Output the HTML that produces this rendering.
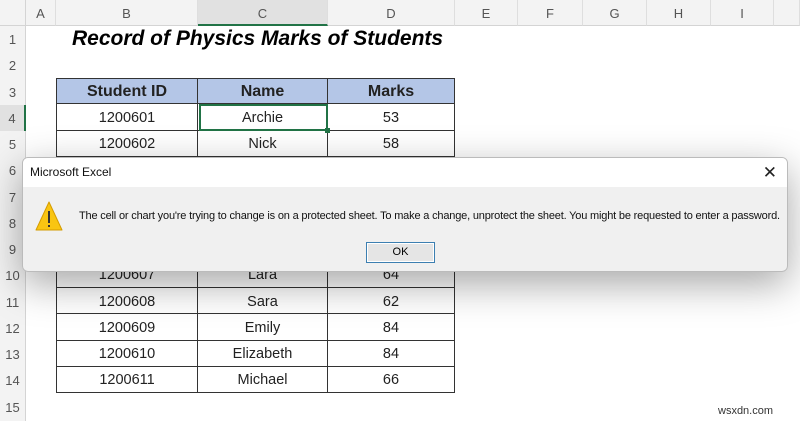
<!DOCTYPE html>
<html style="overflow:hidden;height:421px"><head><meta charset="utf-8"><style>
body{margin:0;width:800px;height:421px;overflow:hidden;background:#fff;font-family:"Liberation Sans",sans-serif;position:relative}
.a{position:absolute}
.ch{top:0;height:26px;background:#f3f3f3;border-bottom:1px solid #d4d4d4;font-size:13px;color:#555;text-align:center;line-height:28px;border-right:1px solid #dedede;box-sizing:border-box}
.rh{left:0;width:26px;background:#f3f3f3;font-size:13px;color:#555;text-align:center;border-right:1px solid #d4d4d4;box-sizing:border-box}
.c{font-size:14.5px;color:#222;text-align:center;box-sizing:border-box;border-right:1px solid #333;border-bottom:1px solid #333;display:flex;align-items:center;justify-content:center;padding-top:2px}
</style></head><body>
<div class="a ch" style="left:0;width:26px;border-right:1px solid #d4d4d4"></div>
<div class="a ch" style="left:26px;width:30px">A</div>
<div class="a ch" style="left:56px;width:142px">B</div>
<div class="a ch" style="left:198px;width:130px;background:#e1e1e1;border-bottom:2px solid #217346">C</div>
<div class="a ch" style="left:328px;width:127px">D</div>
<div class="a ch" style="left:455px;width:63px">E</div>
<div class="a ch" style="left:518px;width:65px">F</div>
<div class="a ch" style="left:583px;width:64px">G</div>
<div class="a ch" style="left:647px;width:64px">H</div>
<div class="a ch" style="left:711px;width:63px">I</div>
<div class="a ch" style="left:774px;width:26px"></div>
<div id="rows"></div>
<div class="a" style="left:72px;top:26px;height:26px;line-height:26px;font-size:21px;font-weight:bold;font-style:italic;color:#000">Record of Physics Marks of Students</div>
<div id="tbl"></div>
<div class="a" style="left:199px;top:104px;width:129px;height:27px;border:2px solid #217346;box-sizing:border-box"></div>
<div class="a" style="left:325px;top:128px;width:5px;height:5px;background:#217346"></div>
<div class="a" style="left:22px;top:157px;width:766px;height:115px;box-shadow:0 12px 40px rgba(0,0,0,0.35);border-radius:6px"></div>
<div class="a" style="left:22px;top:157px;width:766px;height:115px;background:#f0f0f0;border:1px solid #bbb;box-sizing:border-box;border-radius:6px;overflow:hidden">
 <div style="height:29px;background:#fff;font-size:12px;line-height:29px;padding-left:7px;color:#111">Microsoft Excel<span style="position:absolute;right:10px;top:0;font-size:17px;color:#222">✕</span></div>
 <svg class="a" style="left:12px;top:42px" width="28" height="32" viewBox="0 0 28 32"><path d="M14 2 L27 30 L1 30 Z" fill="#f9c512" stroke="#d59c00" stroke-width="1" stroke-linejoin="round"/><rect x="13" y="11" width="2" height="12" fill="#333"/><rect x="13" y="25" width="2" height="2" fill="#333"/></svg>
 <div class="a" style="left:56px;top:52px;font-size:11px;color:#111;white-space:nowrap;letter-spacing:-0.18px">The cell or chart you're trying to change is on a protected sheet. To make a change, unprotect the sheet. You might be requested to enter a password.</div>
 <div class="a" style="left:343px;top:84px;width:69px;height:21px;border:1px solid #3c7fb1;background:#e5e5e5;box-sizing:border-box;font-size:11px;text-align:center;line-height:19px;box-shadow:inset 0 0 0 1px #fff">OK</div>
</div>
<div class="a" style="left:718px;top:405px;font-size:11px;color:#333">wsxdn.com</div>
<script>
var rh=26.25,r="";
for(var i=1;i<=15;i++){var t=26+(i-1)*rh;var hh=(i==15)?(421-t):rh;r+='<div class="a rh" style="top:'+t+'px;height:'+hh+'px;line-height:'+(rh+2)+'px;'+(i==4?'background:#e1e1e1;border-right:2px solid #217346;':'')+'">'+i+'</div>';}
document.getElementById('rows').innerHTML=r;
var d=[["Student ID","Name","Marks"],["1200601","Archie","53"],["1200602","Nick","58"],["","",""],["","",""],["","",""],["","",""],["1200607","Lara","64"],["1200608","Sara","62"],["1200609","Emily","84"],["1200610","Elizabeth","84"],["1200611","Michael","66"]];
var xs=[56,198,328,455],h="";
for(var k=0;k<d.length;k++){var t=78+k*rh;for(var j=0;j<3;j++){h+='<div class="a c" style="left:'+xs[j]+'px;top:'+t+'px;width:'+(xs[j+1]-xs[j])+'px;height:'+rh+'px;'+(j==0?'border-left:1px solid #333;':'')+(k==0?'border-top:1px solid #333;background:#b4c6e7;font-weight:bold;font-size:16px;':'')+'">'+d[k][j]+'</div>';}}
document.getElementById('tbl').innerHTML=h;
</script>
</body></html>
